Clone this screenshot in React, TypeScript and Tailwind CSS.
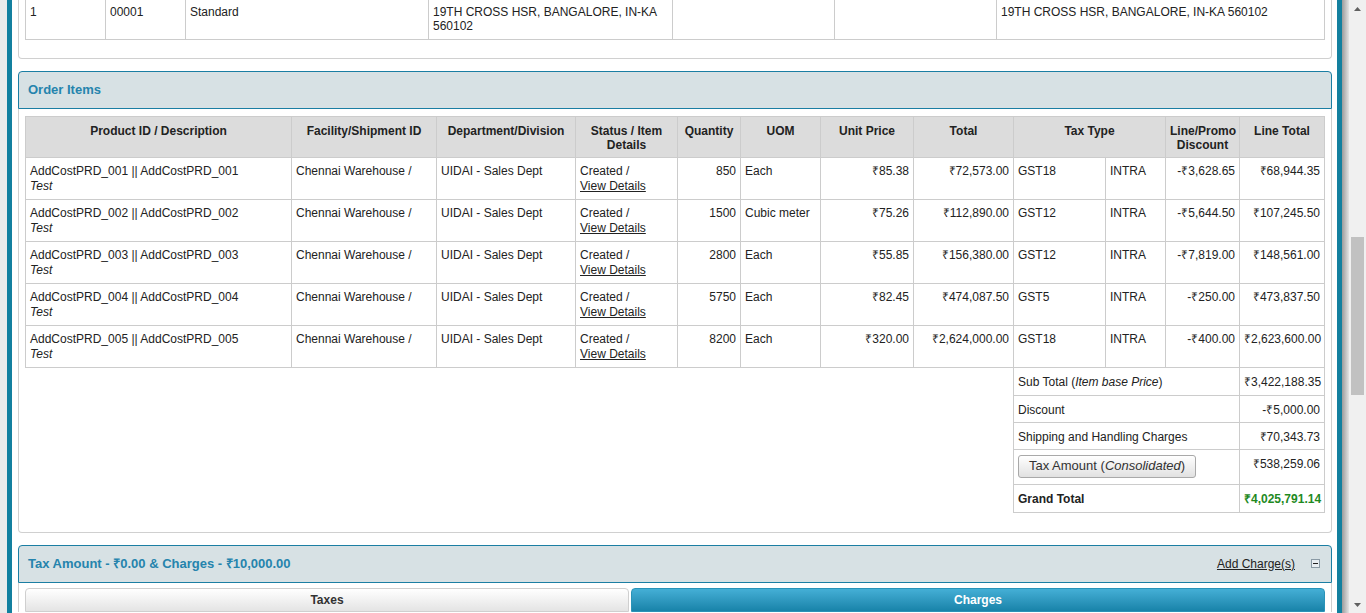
import React from 'react';

const items = [
  { id: 'AddCostPRD_001', qty: '850', uom: 'Each', unit: '₹85.38', total: '₹72,573.00', tax: 'GST18', disc: '-₹3,628.65', line: '₹68,944.35' },
  { id: 'AddCostPRD_002', qty: '1500', uom: 'Cubic meter', unit: '₹75.26', total: '₹112,890.00', tax: 'GST12', disc: '-₹5,644.50', line: '₹107,245.50' },
  { id: 'AddCostPRD_003', qty: '2800', uom: 'Each', unit: '₹55.85', total: '₹156,380.00', tax: 'GST12', disc: '-₹7,819.00', line: '₹148,561.00' },
  { id: 'AddCostPRD_004', qty: '5750', uom: 'Each', unit: '₹82.45', total: '₹474,087.50', tax: 'GST5', disc: '-₹250.00', line: '₹473,837.50' },
  { id: 'AddCostPRD_005', qty: '8200', uom: 'Each', unit: '₹320.00', total: '₹2,624,000.00', tax: 'GST18', disc: '-₹400.00', line: '₹2,623,600.00' },
];

const th = 'border border-[#cccccc] bg-[#dcdcdc] px-[4px] pt-[7px] pb-[5px] align-top text-center font-bold leading-[14px] text-[#222]';
const td = 'border border-[#cccccc] px-[4px] pt-[6px] pb-[5px] align-top leading-[15px]';
const sl = 'border border-[#cccccc] px-[4px] pt-[7px] pb-[5px] align-top leading-[14px]';
const top = 'border-x border-b border-[#cccccc] px-[4px] pt-[5px] align-top leading-[14px]';

function PanelHeader({ title, children }: { title: string; children?: React.ReactNode }) {
  return (
    <div className="flex h-[38px] items-center justify-between rounded-t-[4px] border border-[#1b7ea3] bg-[#d7e1e4] pl-[9px] pr-[11px]">
      <h2 className="text-[13px] font-bold text-[#2584ad]">{title}</h2>
      {children}
    </div>
  );
}

export default function App() {
  return (
    <div className="flex h-[613px] w-[1366px] overflow-hidden bg-white font-['Liberation_Sans',Arial,sans-serif] text-[12px] text-[#222]">
      {/* left frame */}
      <div className="w-[7px] shrink-0 bg-[#ebebeb]" />
      <div className="w-[5px] shrink-0 bg-[#13809f]" />

      {/* main content */}
      <div className="min-w-0 flex-1 pl-[6px] pr-[5px]">
        {/* Shipping info panel (scrolled) */}
        <div className="rounded-b-[4px] border-x border-b border-[#d0d0d0] px-[6px] pb-[18px]">
          <table className="w-full table-fixed border-collapse">
            <colgroup>
              <col className="w-[80px]" />
              <col className="w-[80px]" />
              <col className="w-[243px]" />
              <col className="w-[244px]" />
              <col className="w-[162px]" />
              <col className="w-[162px]" />
              <col />
            </colgroup>
            <tbody>
              <tr className="h-[39px]">
                <td className={top}>1</td>
                <td className={top}>00001</td>
                <td className={top}>Standard</td>
                <td className={top}>19TH CROSS HSR, BANGALORE, IN-KA 560102</td>
                <td className={top} />
                <td className={top} />
                <td className={top}>19TH CROSS HSR, BANGALORE, IN-KA 560102</td>
              </tr>
            </tbody>
          </table>
        </div>

        {/* Order Items */}
        <div className="mt-[12px]">
          <PanelHeader title="Order Items" />
          <div className="rounded-b-[4px] border-x border-b border-[#d0d0d0] px-[6px] pt-[7px] pb-[19px]">
            <table className="w-full table-fixed border-collapse">
              <colgroup>
                <col className="w-[266px]" />
                <col className="w-[145px]" />
                <col className="w-[139px]" />
                <col className="w-[102px]" />
                <col className="w-[63px]" />
                <col className="w-[80px]" />
                <col className="w-[93px]" />
                <col className="w-[100px]" />
                <col className="w-[92px]" />
                <col className="w-[60px]" />
                <col className="w-[74px]" />
                <col />
              </colgroup>
              <thead>
                <tr>
                  <th className={th}>Product ID / Description</th>
                  <th className={th}>Facility/Shipment ID</th>
                  <th className={th}>Department/Division</th>
                  <th className={th}>Status / Item Details</th>
                  <th className={th}>Quantity</th>
                  <th className={th}>UOM</th>
                  <th className={th}>Unit Price</th>
                  <th className={th}>Total</th>
                  <th className={th} colSpan={2}>Tax Type</th>
                  <th className={th}>Line/Promo Discount</th>
                  <th className={th}>Line Total</th>
                </tr>
              </thead>
              <tbody>
                {items.map(it => (
                  <tr key={it.id}>
                    <td className={td}>
                      {it.id} || {it.id}
                      <br />
                      <i>Test</i>
                    </td>
                    <td className={td}>Chennai Warehouse /</td>
                    <td className={td}>UIDAI - Sales Dept</td>
                    <td className={td}>
                      Created /
                      <br />
                      <a className="underline">View Details</a>
                    </td>
                    <td className={`${td} text-right`}>{it.qty}</td>
                    <td className={td}>{it.uom}</td>
                    <td className={`${td} text-right`}>{it.unit}</td>
                    <td className={`${td} text-right`}>{it.total}</td>
                    <td className={td}>{it.tax}</td>
                    <td className={td}>INTRA</td>
                    <td className={`${td} text-right`}>{it.disc}</td>
                    <td className={`${td} text-right`}>{it.line}</td>
                  </tr>
                ))}
                <tr>
                  <td colSpan={8} className="border-0" />
                  <td colSpan={3} className={`${sl} h-[28px]`}>
                    Sub Total (<i>Item base Price</i>)
                  </td>
                  <td className={`${sl} text-right`}>₹3,422,188.35</td>
                </tr>
                <tr>
                  <td colSpan={8} className="border-0" />
                  <td colSpan={3} className={sl}>Discount</td>
                  <td className={`${sl} text-right`}>-₹5,000.00</td>
                </tr>
                <tr>
                  <td colSpan={8} className="border-0" />
                  <td colSpan={3} className={sl}>Shipping and Handling Charges</td>
                  <td className={`${sl} text-right`}>₹70,343.73</td>
                </tr>
                <tr>
                  <td colSpan={8} className="border-0" />
                  <td colSpan={3} className="border border-[#cccccc] px-[4px] pt-[5px] pb-[6px] align-top">
                    <button className="h-[23px] rounded-[3px] border border-[#a9a9a9] bg-gradient-to-b from-white to-[#e1e1e1] px-[10px] text-[13px] leading-[14px] text-[#333]">
                      Tax Amount (<i>Consolidated</i>)
                    </button>
                  </td>
                  <td className={`${sl} text-right`}>₹538,259.06</td>
                </tr>
                <tr>
                  <td colSpan={8} className="border-0" />
                  <td colSpan={3} className={`${sl} h-[28px] font-bold`}>Grand Total</td>
                  <td className={`${sl} text-right font-bold text-[#1f8a1f]`}>₹4,025,791.14</td>
                </tr>
              </tbody>
            </table>
          </div>
        </div>

        {/* Tax Amount & Charges */}
        <div className="mt-[12px]">
          <PanelHeader title="Tax Amount - ₹0.00 & Charges - ₹10,000.00">
            <div className="flex items-center gap-[16px]">
              <a className="text-[12px] text-[#222] underline">Add Charge(s)</a>
              <span className="flex h-[9px] w-[9px] items-center justify-center border border-[#8a9aa5] bg-[#e8eef2]">
                <span className="h-px w-[5px] bg-[#222]" />
              </span>
            </div>
          </PanelHeader>
          <div className="border-x border-[#d0d0d0] px-[6px] pt-[5px]">
            <div className="flex gap-[2px]">
              <div className="flex h-[24px] w-[604px] items-center justify-center rounded-t-[4px] border border-[#cfcfcf] bg-gradient-to-b from-white to-[#e4e4e4] font-bold text-[#333]">
                Taxes
              </div>
              <div className="flex h-[24px] flex-1 items-center justify-center rounded-t-[4px] border border-[#2a93b8] bg-gradient-to-b from-[#44afd6] to-[#1783a9] font-bold text-white">
                Charges
              </div>
            </div>
          </div>
        </div>
      </div>

      {/* right frame */}
      <div className="w-[5px] shrink-0 bg-[#13809f]" />
      <div className="w-[7px] shrink-0 bg-gradient-to-r from-[#9c9c9c] to-[#e4e4e4]" />

      {/* scrollbar */}
      <div className="flex w-[17px] shrink-0 flex-col items-center bg-[#f0f0f0]">
        <div className="flex h-[17px] items-center justify-center">
          <svg width="7" height="4" viewBox="0 0 7 4"><path d="M0 4 L3.5 0 L7 4 Z" fill="#606060" /></svg>
        </div>
        <div className="mt-[220px] h-[158px] w-[13px] bg-[#c1c1c1]" />
        <div className="flex-1" />
        <div className="flex h-[17px] items-center justify-center">
          <svg width="7" height="4" viewBox="0 0 7 4"><path d="M0 0 L3.5 4 L7 0 Z" fill="#606060" /></svg>
        </div>
      </div>
    </div>
  );
}
